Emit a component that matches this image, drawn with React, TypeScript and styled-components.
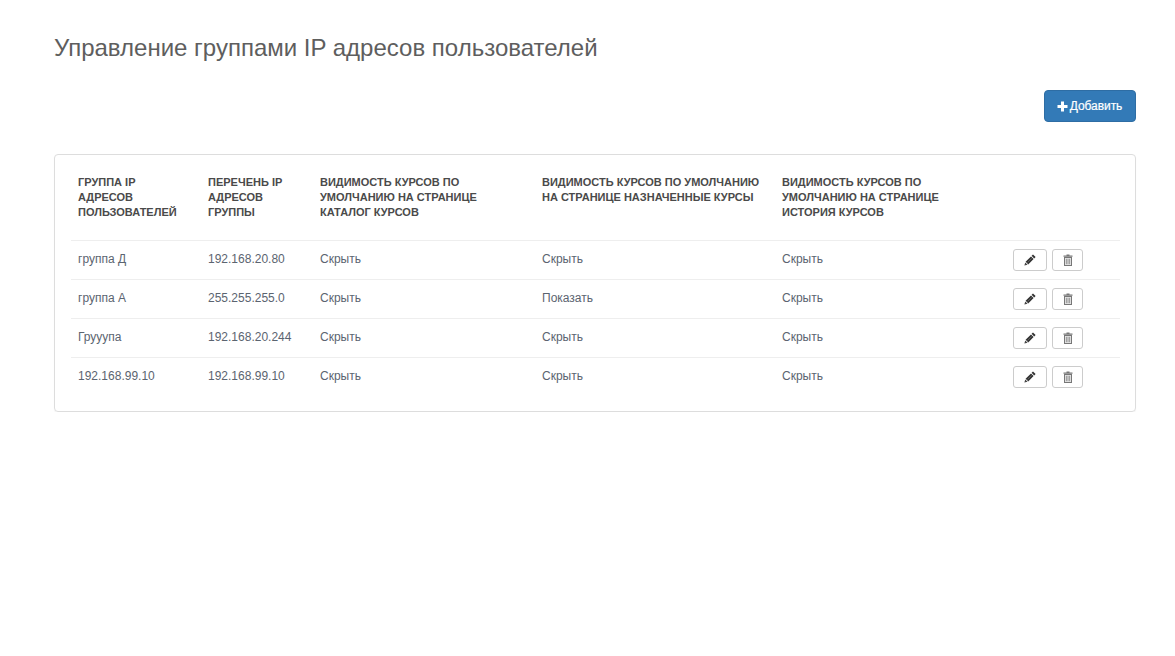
import React from "react";
import styled, { createGlobalStyle } from "styled-components";

const Global = createGlobalStyle`
  html, body { margin: 0; padding: 0; background: #fff; }
  body { font-family: "Liberation Sans", Arial, sans-serif; font-size: 12px; color: #5b6470; }
`;

const Page = styled.div`
  padding: 35px 39px 0 54px;
`;

const Title = styled.h1`
  margin: 0;
  font-size: 24px;
  line-height: 26px;
  font-weight: 400;
  color: #5e5e5e;
`;

const Toolbar = styled.div`
  display: flex;
  justify-content: flex-end;
  margin-top: 29px;
`;

const AddButton = styled.button`
  display: inline-flex;
  align-items: center;
  justify-content: center;
  gap: 2px;
  width: 92px;
  height: 32px;
  padding: 0 1px 0 0;
  border: 1px solid #2e6da4;
  border-radius: 4px;
  background: #337ab7;
  color: #fff;
  font: 400 12px "Liberation Sans", Arial, sans-serif;
  letter-spacing: -0.05px;
  -webkit-text-stroke: 0.2px #fff;
`;

const Card = styled.div`
  margin-top: 32px;
  padding: 16px 15px 15px 16px;
  border: 1px solid #ddd;
  border-radius: 4px;
  box-shadow: 0 1px 1px rgba(0, 0, 0, 0.05);
`;

const Table = styled.table`
  width: 100%;
  table-layout: fixed;
  border-collapse: collapse;
`;

const Head = styled.th<{ $pr?: number }>`
  height: 69px;
  padding: 4px ${(p) => p.$pr ?? 7}px 0 7px;
  box-sizing: border-box;
  vertical-align: top;
  text-align: left;
  font-size: 11px;
  line-height: 15px;
  font-weight: 700;
  text-transform: uppercase;
  color: #4a4a4a;
`;

const Row = styled.tr`
  border-top: 1px solid #eee;
`;

const Cell = styled.td`
  height: 39px;
  padding: 0 7px;
  box-sizing: border-box;
  vertical-align: middle;
  font-size: 12px;
  line-height: 17px;
  color: #5b6470;
`;

const Actions = styled.div`
  display: flex;
  gap: 5px;
  margin-top: 1px;
`;

const IconButton = styled.button<{ $w: number }>`
  display: inline-flex;
  align-items: center;
  justify-content: center;
  width: ${(p) => p.$w}px;
  height: 22px;
  padding: 0;
  border: 1px solid #ccc;
  border-radius: 3px;
  background: #fff;
`;

const Plus = () => (
  <svg width="11" height="11" viewBox="0 0 11 11" aria-hidden="true">
    <path d="M4 .5h3V4h3.5v3H7v3.5H4V7H.5V4H4z" fill="#fff" />
  </svg>
);

const Pencil = () => (
  <svg width="12" height="12" viewBox="0 0 12 12" aria-hidden="true">
    <path d="M9 .4 11.6 3 10.2 4.4 7.6 1.8zM7 2.4 9.6 5 4.2 10.4 3.4 9.6 2.4 8.6 1.6 7.8z" fill="#333" />
    <path d="M1.2 8.4 3.6 10.8.4 11.6z" fill="#444" />
    <path d="M3.6 8.4 7.8 4.2" stroke="#888" strokeWidth=".5" fill="none" />
  </svg>
);

const Trash = () => (
  <svg width="10" height="12" viewBox="0 0 10 12" aria-hidden="true">
    <path d="M3.5.4h3v1.1h3v1.3H.5V1.5h3z" fill="#777" />
    <rect x="1.5" y="3.5" width="7" height="8" fill="#e4e4e4" stroke="#777" />
    <path d="M3.4 4.8v5.4M5 4.8v5.4M6.6 4.8v5.4" stroke="#888" strokeWidth=".8" fill="none" />
  </svg>
);

const widths = [130, 112, 222, 240, 231, 114];
const headers: [string, number][] = [
  ["Группа IP адресов пользователей", 20],
  ["Перечень IP адресов группы", 7],
  ["Видимость курсов по умолчанию на странице каталог курсов", 7],
  ["Видимость курсов по умолчанию на странице назначенные курсы", 7],
  ["Видимость курсов по умолчанию на странице история курсов", 40],
];
const rows = [
  ["группа Д", "192.168.20.80", "Скрыть", "Скрыть", "Скрыть"],
  ["группа А", "255.255.255.0", "Скрыть", "Показать", "Скрыть"],
  ["Грууупа", "192.168.20.244", "Скрыть", "Скрыть", "Скрыть"],
  ["192.168.99.10", "192.168.99.10", "Скрыть", "Скрыть", "Скрыть"],
];

export default function App() {
  return (
    <Page>
      <Global />
      <Title>Управление группами IP адресов пользователей</Title>
      <Toolbar>
        <AddButton>
          <Plus />
          Добавить
        </AddButton>
      </Toolbar>
      <Card>
        <Table>
          <colgroup>
            {widths.map((w, i) => (
              <col key={i} style={{ width: w }} />
            ))}
          </colgroup>
          <thead>
            <tr>
              {headers.map(([h, pr]) => (
                <Head key={h} $pr={pr}>
                  {h}
                </Head>
              ))}
              <Head />
            </tr>
          </thead>
          <tbody>
            {rows.map((r, i) => (
              <Row key={i}>
                {r.map((c, j) => (
                  <Cell key={j}>{c}</Cell>
                ))}
                <Cell>
                  <Actions>
                    <IconButton $w={34}>
                      <Pencil />
                    </IconButton>
                    <IconButton $w={31}>
                      <Trash />
                    </IconButton>
                  </Actions>
                </Cell>
              </Row>
            ))}
          </tbody>
        </Table>
      </Card>
    </Page>
  );
}
